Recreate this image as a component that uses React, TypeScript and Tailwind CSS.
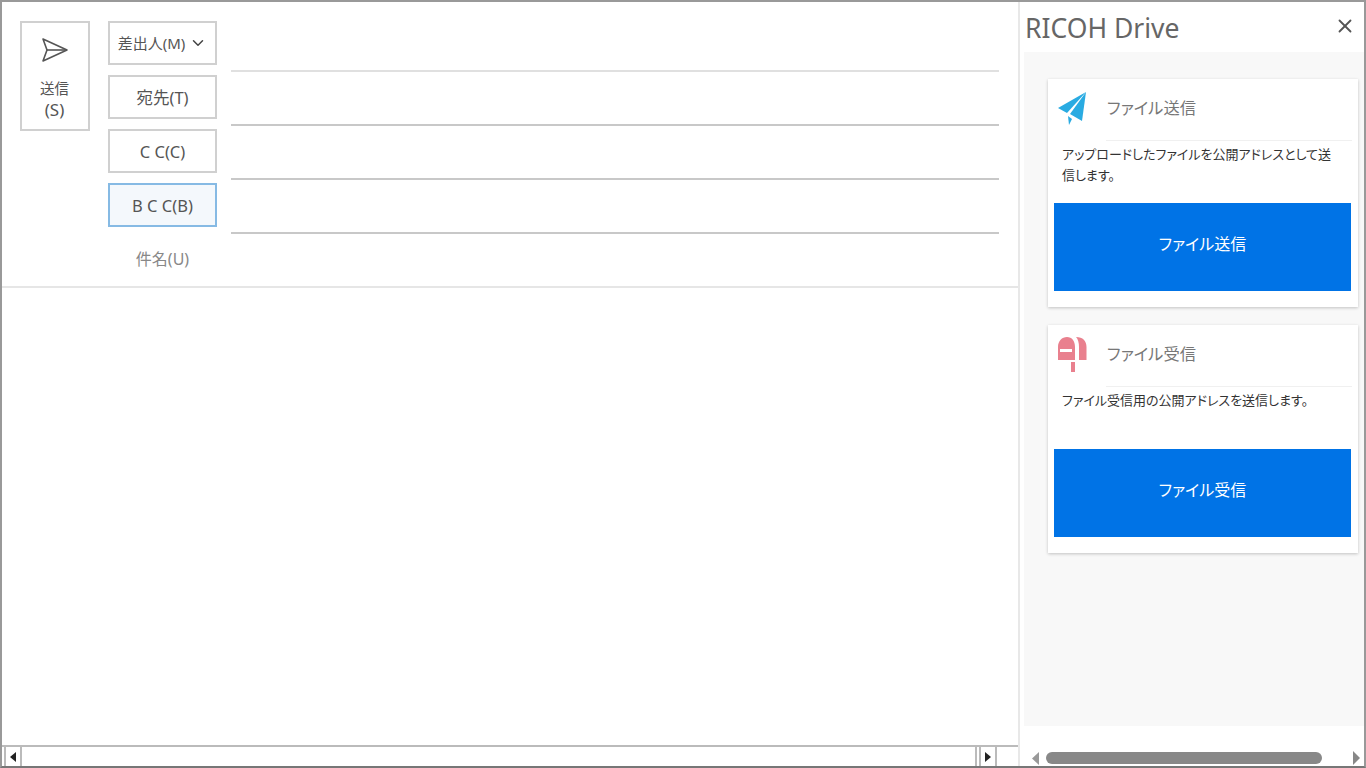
import { ChevronDown, X } from "lucide-react";

const FONT = "font-['Noto_Sans','Noto_Sans_CJK_JP',sans-serif]";

function AddressButton({ label, active, chevron }: { label: string; active?: boolean; chevron?: boolean }) {
  return (
    <div
      className={`flex h-[44px] w-[109px] items-center justify-center border-2 text-[#555] ${
        chevron ? "text-[15px]" : "pt-[2px] text-[16.5px]"
      } ${active ? "border-[#86bae4] bg-[#f4f8fc]" : "border-[#d0d0d0] bg-white"}`}
    >
      <span>{label}</span>
      {chevron && <ChevronDown className="ml-[4px] h-[18px] w-[18px] text-[#444]" strokeWidth={2} />}
    </div>
  );
}

function SendIcon() {
  return (
    <svg width="28" height="26" viewBox="0 0 28 26" fill="none" stroke="#555" strokeWidth="1.6" strokeLinejoin="round">
      <path d="M2 2 L26 13 L2 24 L6 13 Z" />
      <path d="M6 13 H26" />
    </svg>
  );
}

function PlaneIcon() {
  return (
    <svg width="30" height="34" viewBox="0 0 30 34" fill="#29abe2">
      <path d="M28 0 L0 16 L9 21 Z" />
      <path d="M28 0 L12 22 L24 29 Z" />
      <path d="M10 24 L14 27 L11 33 Z" />
    </svg>
  );
}

function MailboxIcon() {
  return (
    <svg width="30" height="36" viewBox="0 0 30 36" fill="#e9808e">
      <path d="M0 23 V10 C0 4 4 0 9 0 C14 0 17 4 17 10 V23 Z M2 12 V15 H14 V12 Z" fillRule="evenodd" />
      <path d="M18 0 C25 0 28.5 4 28.5 10 V23 H21 V10 C21 6 20 2 18 0 Z" />
      <rect x="13" y="25" width="4" height="10" />
    </svg>
  );
}

function ActionCard({
  icon,
  title,
  body,
  action,
}: {
  icon: React.ReactNode;
  title: string;
  body: string;
  action: string;
}) {
  return (
    <div className="h-[228px] w-[310px] bg-white px-[6px] shadow-[0_1px_3px_rgba(0,0,0,0.22)] [font-feature-settings:'palt']">
      <div className="flex h-[61px] items-center pb-[2px]">
        <div className="flex w-[52px] justify-start pl-[4px]">{icon}</div>
        <div className="pl-[1px] text-[16.3px] text-[#777]">{title}</div>
      </div>
      <div className="ml-[52px] border-t border-[#f0f0f0]" />
      <div className="h-[62px] px-[8px] pt-[3px] text-[13px] leading-[21px] text-[#333]">{body}</div>
      <div className="flex h-[88px] w-[297px] items-center justify-center bg-[#0073e6] pb-[7px] text-[16px] text-white">
        {action}
      </div>
    </div>
  );
}

function Arrow({ dir, color, h, w }: { dir: "left" | "right"; color: string; h: number; w: number }) {
  return (
    <svg width={w} height={h} viewBox="0 0 10 14" fill={color} preserveAspectRatio="none">
      <path d={dir === "left" ? "M10 0 L0 7 L10 14 Z" : "M0 0 L10 7 L0 14 Z"} />
    </svg>
  );
}

export default function App() {
  return (
    <div className={`flex h-[768px] w-[1366px] overflow-hidden border-2 border-x-[#999] border-b-[#777] border-t-[#999] bg-white ${FONT}`}>
      <div className="flex w-[1016px] shrink-0 flex-col">
        <div className="flex h-[286px] shrink-0 border-b-2 border-[#e6e6e6] pl-[18px] pt-[19px]">
          <div className="flex h-[110px] w-[70px] shrink-0 flex-col items-center border-2 border-[#d0d0d0] pt-[14px] leading-[22px] text-[#555]">
            <SendIcon />
            <div className="mt-[14px] pr-[1px] text-center text-[14.5px]">
              送信
              <br />
              <span className="text-[17px]">(S)</span>
            </div>
          </div>
          <div className="ml-[18px] flex w-[109px] shrink-0 flex-col gap-[10px]">
            <AddressButton label="差出人(M)" chevron />
            <AddressButton label="宛先(T)" />
            <AddressButton label="C C(C)" />
            <AddressButton label="B C C(B)" active />
            <div className="mt-[10px] text-center text-[16px] text-[#888]">件名(U)</div>
          </div>
          <div className="ml-[14px] flex w-[768px] shrink-0 flex-col">
            <div className="h-[51px] border-b-2 border-[#e0e0e0]" />
            <div className="h-[54px] border-b-2 border-[#c8c8c8]" />
            <div className="h-[54px] border-b-2 border-[#c8c8c8]" />
            <div className="h-[54px] border-b-2 border-[#c8c8c8]" />
          </div>
        </div>
        <div className="flex-1" />
        <div className="flex h-[21px] shrink-0 items-stretch border-t-2 border-[#bbb] pl-[2px] pr-[21px]">
          <div className="flex w-[18px] items-center justify-center border-x-2 border-[#bbb]">
            <Arrow dir="left" color="#222" h={10} w={6} />
          </div>
          <div className="mr-[2px] flex-1 border-r-2 border-[#bbb]" />
          <div className="flex w-[18px] items-center justify-center border-x-2 border-[#bbb]">
            <Arrow dir="right" color="#222" h={10} w={6} />
          </div>
        </div>
      </div>
      <div className="flex min-w-0 flex-1 flex-col border-l-2 border-[#e8e8e8]">
        <div className="flex h-[50px] shrink-0 items-center justify-between pl-[5px] pr-[8px] pt-[3px]">
          <div className="text-[26.5px] leading-none text-[#666]">RICOH Drive</div>
          <X className="mb-[5px] h-[22px] w-[22px] text-[#555]" strokeWidth={2} />
        </div>
        <div className="ml-[4px] flex h-[674px] shrink-0 flex-col gap-[18px] bg-[#f8f8f8] pl-[24px] pt-[27px]">
          <ActionCard
            icon={<PlaneIcon />}
            title="ファイル送信"
            body="アップロードしたファイルを公開アドレスとして送信します。"
            action="ファイル送信"
          />
          <ActionCard
            icon={<MailboxIcon />}
            title="ファイル受信"
            body="ファイル受信用の公開アドレスを送信します。"
            action="ファイル受信"
          />
        </div>
        <div className="flex flex-1 items-end pb-[1px] pl-[12px] pr-[4px]">
          <div className="flex h-[14px] w-full items-center">
            <Arrow dir="left" color="#999" h={13} w={7} />
            <div className="ml-[7px] h-[12px] w-[276px] rounded-full bg-[#888]" />
            <div className="flex-1" />
            <Arrow dir="right" color="#888" h={14} w={7} />
          </div>
        </div>
      </div>
    </div>
  );
}
